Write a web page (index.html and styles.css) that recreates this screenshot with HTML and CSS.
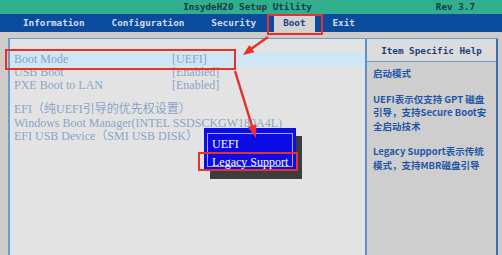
FILE: index.html
```html
<!DOCTYPE html>
<html lang="zh-CN">
<head>
    <meta charset="UTF-8">
    <title>InsydeH20 Setup Utility</title>
    <link rel="stylesheet" href="styles.css">
</head>
<body>
    <header class="titlebar">
        <span></span>
        <span class="title">InsydeH20 Setup Utility</span>
        <span class="rev">Rev 3.7</span>
    </header>
    <nav class="tabs">
        <span class="tab">Information</span>
        <span class="tab">Configuration</span>
        <span class="tab">Security</span>
        <span class="tab active">Boot</span>
        <span class="tab">Exit</span>
    </nav>

    <div class="body">
        <div class="frame">
            <section class="main">
                <div class="row selected"><span class="label">Boot Mode</span><span>[UEFI]</span></div>
                <div class="row"><span class="label">USB Boot</span><span>[Enabled]</span></div>
                <div class="row"><span class="label">PXE Boot to LAN</span><span>[Enabled]</span></div>

                <div class="group">
                    <div class="row">EFI（纯UEFI引导的优先权设置）</div>
                    <div class="row">Windows Boot Manager(INTEL SSDSCKGW180A4L)</div>
                    <div class="row">EFI USB Device（SMI USB DISK）</div>
                </div>
            </section>

            <aside class="help">
                <div class="help-head">Item Specific Help</div>
                <div class="help-body">
                    <p>启动模式</p>
                    <p>UEFI表示仅支持 GPT 磁盘<br>引导，支持Secure Boot安<br>全启动技术</p>
                    <p>Legacy Support表示传统<br>模式，支持MBR磁盘引导</p>
                </div>
            </aside>
        </div>
    </div>

    <!-- popup menu -->
    <div class="popup">
        <div class="popup-inner">
            <div class="opt">UEFI</div>
            <div class="opt">Legacy Support</div>
        </div>
    </div>

    <!-- red annotations -->
    <div class="mark mark-tab"></div>
    <div class="mark mark-mode"></div>
    <div class="mark mark-legacy"></div>
    <svg class="arrows" width="502" height="255" viewBox="0 0 502 255">
        <line x1="268" y1="37" x2="251" y2="49" stroke="#e8302c" stroke-width="2.5"/>
        <polygon points="243,55 254.5,52.2 249.3,45" fill="#e8302c"/>
        <line x1="235" y1="71" x2="252" y2="126" stroke="#e8302c" stroke-width="2.5"/>
        <polygon points="256,138 256.4,124.3 247.8,126.9" fill="#e8302c"/>
    </svg>
</body>
</html>
```

FILE: styles.css
```css
* {
    box-sizing: border-box;
}
body {
    margin: 0;
    width: 502px;
    height: 255px;
    overflow: hidden;
    position: relative;
    background: #cfcbc7;
    font-family: "Liberation Serif", "Noto Sans CJK SC", serif;
}

.titlebar {
    height: 14px;
    display: grid;
    grid-template-columns: 1fr auto 1fr;
    padding-right: 7px;
    background: #30ae8e;
    color: #163a4c;
    font: bold 9.3px/14px "DejaVu Sans Mono", monospace;
}
.rev {
    text-align: right;
    padding-right: 20px;
}

.tabs {
    height: 18px;
    display: flex;
    gap: 9px;
    padding-left: 14px;
    background: #0c4c9e;
    color: #d4dcec;
    font: bold 9.3px/18px "DejaVu Sans Mono", monospace;
}
.tab {
    padding: 0 9px;
}
.tab.active {
    background: #d3d3d3;
    color: #1b3c84;
}

.body {
    height: 223px;
    padding: 6px 4px 0 8px;
}
.frame {
    height: 100%;
    display: flex;
    border-top: 1px solid #6b9bd1;
    border-left: 2px solid #6b9bd1;
}

.main {
    flex: 1;
    padding-top: 14px;
    background: #e3e3e3;
    box-shadow: inset 3px 0 0 #dde5ec;
    color: #8aa3c7;
    font-size: 12px;
}
.row {
    height: 13px;
    line-height: 13px;
    padding-left: 4px;
    white-space: nowrap;
}
.row.selected {
    background: #cde7f7;
}
.label {
    display: inline-block;
    width: 158px;
}
.group {
    margin-top: 11px;
}
.group .row {
    height: 13.5px;
    line-height: 13.5px;
}

.help {
    width: 133px;
    display: flex;
    flex-direction: column;
    border-left: 2px solid #5d8fcb;
    border-right: 2px solid #3b70b3;
}
.help-head {
    height: 23px;
    padding-top: 2px;
    background: #dcdcdc;
    border-bottom: 1px solid #6b9bd1;
    text-align: center;
    color: #1d3f7e;
    font: bold 9.3px/20px "DejaVu Sans Mono", monospace;
}
.help-body {
    flex: 1;
    padding: 5px 0 0 6px;
    background: #cecece;
    color: #1f57a6;
    font: bold 9.5px/13.5px "Noto Sans CJK SC", sans-serif;
    white-space: nowrap;
}
.help-body p {
    margin: 0 0 12px;
}

.popup {
    position: absolute;
    left: 204px;
    top: 128px;
    width: 92px;
    height: 43px;
    padding: 5px 3px 4px;
    background: #0c0ce6;
    box-shadow: 6px 8px 0 #3d3d3d;
}
.popup-inner {
    height: 100%;
    padding: 1px 0 0 4px;
    border: 1px solid #a9a9f5;
    color: #fff;
    font-size: 12px;
}
.opt {
    line-height: 18px;
    white-space: nowrap;
}

.mark {
    position: absolute;
    border: 2px solid #e8302c;
}
.mark-tab {
    left: 267px;
    top: 14px;
    width: 56px;
    height: 21px;
}
.mark-mode {
    left: 5px;
    top: 49px;
    width: 231px;
    height: 21px;
}
.mark-legacy {
    left: 198px;
    top: 152px;
    width: 100px;
    height: 19px;
}
.arrows {
    position: absolute;
    left: 0;
    top: 0;
    pointer-events: none;
}
```
